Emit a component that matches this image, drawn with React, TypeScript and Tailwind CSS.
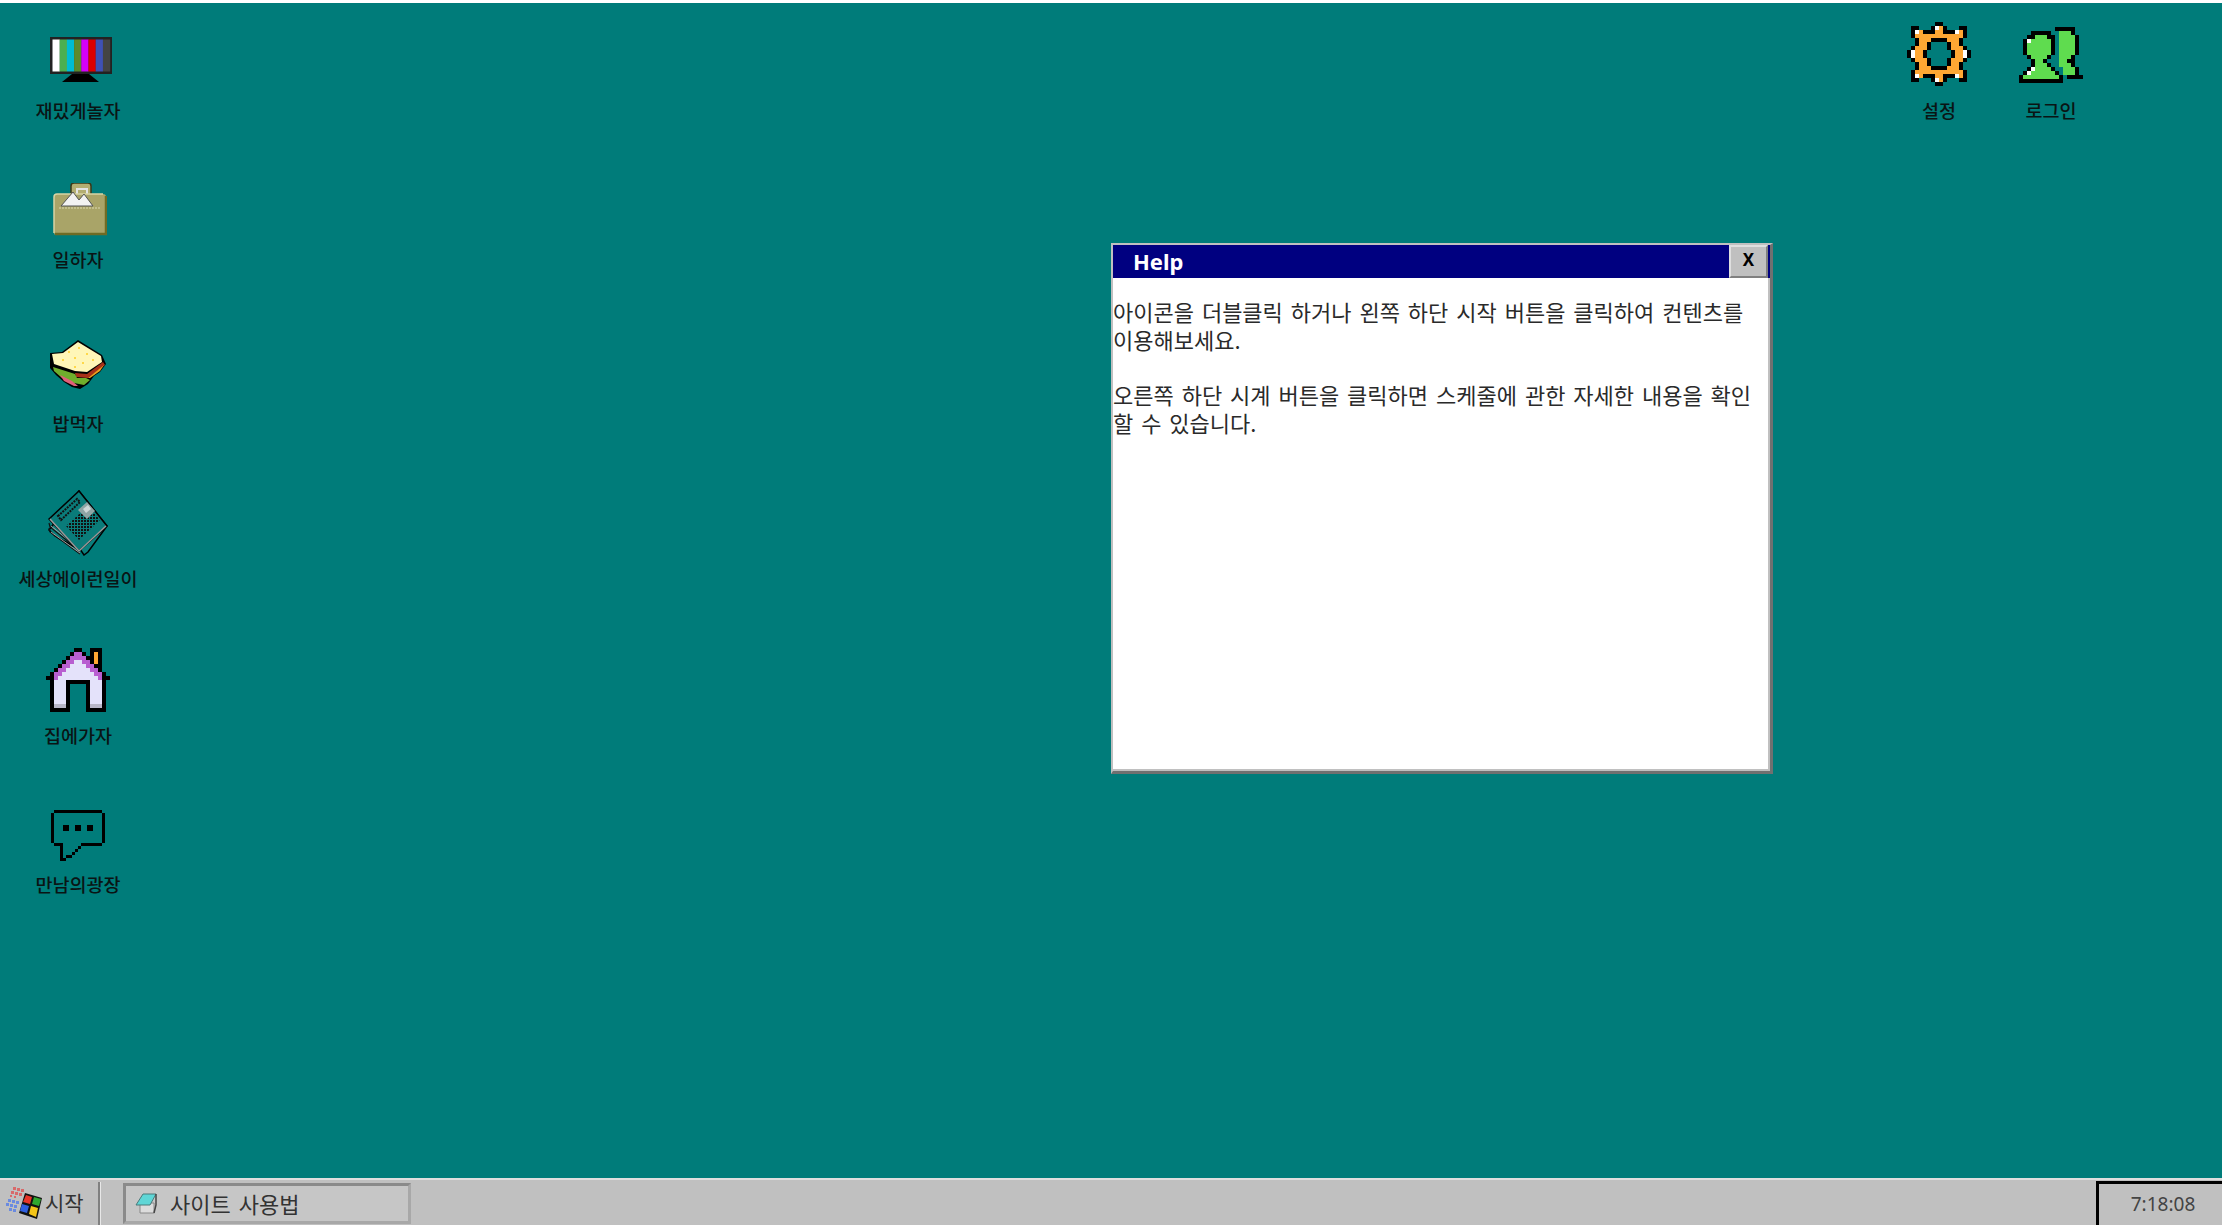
const KO = "font-['Noto_Sans_CJK_KR','Noto_Sans',sans-serif]"

const palette: Record<string, string> = {
  k: '#000000',
  p: '#b85fd0',
  l: '#e4e2fa',
  o: '#ffa733',
  w: '#ffffff',
  g: '#5fdc4f',
  d: '#b9b7c8',
}

function Pixels({ rows, size = 4 }: { rows: string[]; size?: number }) {
  const w = Math.max(...rows.map((r) => r.length))
  return (
    <svg width={w * size} height={rows.length * size} viewBox={`0 0 ${w} ${rows.length}`} shapeRendering="crispEdges">
      {rows.map((row, y) =>
        row.split('').map((c, x) => (palette[c] ? <rect key={`${x}-${y}`} x={x} y={y} width={1} height={1} fill={palette[c]} /> : null)),
      )}
    </svg>
  )
}

const house = [
  '.......kk..kkk..',
  '......kppk.kok..',
  '.....kppppkkok..',
  '....kppllppkok..',
  '...kppllllppkk..',
  '..kppllllllppk..',
  '.kppllllllllppk.',
  'kkpllllllllllpkk',
  '.klllkkkkkklllk.',
  '.klllk....klllk.',
  '.klllk....klllk.',
  '.klllk....klllk.',
  '.klllk....klllk.',
  '.klllk....klllk.',
  '.kdddk....kdddk.',
  '.kkkkk....kkkkk.',
]

const gear = [
  '.......kk.......',
  '.kk...kwok...kk.',
  '.kwokkkookkkwok.',
  '.kooooooooooook.',
  '..koookkkkoook..',
  '..kook....kook..',
  '.koook....koook.',
  'kwook......koowk',
  'kwook......koowk',
  '.koook....koook.',
  '..kook....kook..',
  '..koookkkkoook..',
  '.kooooooooooook.',
  '.kwokkkookkkwok.',
  '.kk...kwok...kk.',
  '.......kk.......',
]

const users = [
  '.........kkkkk..',
  '...kkkkk..gggk..',
  '..kkgggkk.ggggk.',
  '.kwgggggk.ggggk.',
  '.kggggggk.ggggk.',
  '.kggggggk.ggggk.',
  '.kggggggk.ggggk.',
  '..kggggk..gggk..',
  '...kggk...ggkk..',
  '...kgggk..gggk..',
  '..kwggggk..gggk.',
  '.kwggggggk.gggk.',
  'kgggggggggk.kkkk',
  'kkkkkkkkkkk.....',
]

const chat = [
  '.kkkkkkkkkkkkkkkk.',
  'k................k',
  'k................k',
  'k................k',
  'k................k',
  'k...kk..kk..kk...k',
  'k...kk..kk..kk...k',
  'k................k',
  'k................k',
  'k................k',
  'k................k',
  '.kkk......kkkkkkk.',
  '...k.....k........',
  '...k....k.........',
  '...k...k..........',
  '...k.kk...........',
  '...kk.............',
]

function Tv() {
  const bars = ['#ffffff', '#4caf50', '#00bcd4', '#5d8a2e', '#d500f9', '#dd0000', '#3f51b5', '#444444']
  return (
    <svg width={62} height={46} viewBox="0 0 62 46" className="ml-[5px]">
      <rect x={0} y={0} width={62} height={37} fill="#222222" />
      {bars.map((c, i) => (
        <rect key={c} x={2.5 + i * 7.2} y={2.5} width={7.3} height={32} fill={c} />
      ))}
      <path d="M12 45 L22 37 H39 L49 45Z" fill="#000" />
    </svg>
  )
}

function Briefcase() {
  return (
    <svg width={54} height={54} viewBox="0 0 54 54" className="ml-[3px]">
      <path d="M18 12V3q0-3 3-3h14q3 0 3 3v9" fill="#b4ae72" stroke="#3a3818" strokeWidth={1.5} />
      <path d="M24 14V6h10v8" fill="none" stroke="#e4e4e4" strokeWidth={2} />
      <path d="M1 14q0-3 3-3h46q3 0 3 3v36q0 2-2 2H3q-2 0-2-2Z" fill="#a9a468" />
      <path d="M1 50V14q0-3 3-3h46" fill="none" stroke="#d8d4a4" strokeWidth={1.5} />
      <path d="M53 13v38H2" fill="none" stroke="#6f6b24" strokeWidth={2.5} />
      <path d="M6 25h42" stroke="#dcd9b0" strokeWidth={1} strokeDasharray="2 1" />
      <path d="M8 23L20 9l6 8 5-6 9 12Z" fill="#f2f2f2" stroke="#555" strokeWidth={1} />
    </svg>
  )
}

function Sandwich() {
  return (
    <svg width={58} height={50} viewBox="0 0 58 50" className="ml-[1px]">
      <path d="M0 13L12 12 28 0 52 15 56 24 50 32 44 36 38 44 30 49 22 47 14 42 6 35 0 28Z" fill="#000" />
      <path d="M25 33L37 34 53 22 55 25 38 38 26 37Z" fill="#a83018" />
      <path d="M3 27L25 34 27 38 36 38 40 40 34 45 24 43 12 38 4 31Z" fill="#6fae2c" />
      <path d="M38 38L54 25 50 31 40 38Z" fill="#f0a020" />
      <path d="M10 35L22 41 28 46 24 46 14 41Z" fill="#e0607a" />
      <path d="M2 14L13 13 28 2 51 16 52 22 37 32 25 31 4 24Z" fill="#fff6b8" />
      <g fill="#ffd84a">
        <rect x={18} y={11} width={2} height={2} />
        <rect x={28} y={7} width={2} height={2} />
        <rect x={36} y={13} width={2} height={2} />
        <rect x={24} y={17} width={2} height={2} />
        <rect x={12} y={19} width={2} height={2} />
        <rect x={32} y={22} width={2} height={2} />
        <rect x={42} y={19} width={2} height={2} />
        <rect x={24} y={26} width={2} height={2} />
      </g>
    </svg>
  )
}

function Newspaper() {
  return (
    <svg width={60} height={66} viewBox="0 0 60 66">
      <defs>
        <pattern id="dots" width={3} height={3} patternUnits="userSpaceOnUse">
          <rect width={2} height={2} fill="#111" />
        </pattern>
      </defs>
      <path d="M1 40l6 6 5 3 6 3 7 4 7 3 4 6 4-3L59 36 31 1Z" fill="#0b7f7d" stroke="#000" strokeWidth={1.5} />
      <path d="M1 33l1 4 30 24M1 38l1 4 30 22" fill="none" stroke="#111" strokeWidth={1.2} />
      <path d="M3 36l29 23M3 42l29 21" stroke="#a0a0a0" strokeWidth={1} />
      <path d="M1 29L31 1l28 35-28 25Z" fill="#0a7c7a" stroke="#000" strokeWidth={1.5} />
      <path d="M2 29l29 32 27-25" fill="none" stroke="#9a9a9a" strokeWidth={1.5} />
      <path d="M10 26L29 9l3 3-19 18Z" fill="none" stroke="#111" strokeWidth={2} strokeDasharray="2 1" />
      <path d="M18 36l22-20 12 14-21 20Z" fill="url(#dots)" />
      <path d="M30 20l9-8 8 9-8 8Z" fill="#8fa5a5" />
      <path d="M35 19l5-4 3 4-5 4Z" fill="#cfd8d8" />
    </svg>
  )
}

function WinLogo() {
  return (
    <svg width={38} height={33} viewBox="0 0 38 33">
      <g fill="#d86a6a">
        <rect x={8} y={1} width={3} height={3} />
        <rect x={12} y={2} width={3} height={3} />
        <rect x={16} y={3} width={3} height={3} />
        <rect x={6} y={5} width={3} height={3} />
        <rect x={10} y={6} width={3} height={3} />
        <rect x={14} y={7} width={3} height={3} />
        <rect x={5} y={9} width={2} height={2} />
        <rect x={9} y={10} width={2} height={2} />
      </g>
      <g fill="#6a8ae0">
        <rect x={3} y={13} width={3} height={3} />
        <rect x={7} y={14} width={3} height={3} />
        <rect x={11} y={15} width={3} height={3} />
        <rect x={1} y={17} width={3} height={3} />
        <rect x={5} y={18} width={3} height={3} />
        <rect x={9} y={19} width={3} height={3} />
        <rect x={4} y={22} width={3} height={3} />
        <rect x={8} y={23} width={3} height={3} />
      </g>
      <path d="M20 7L37 12 32 33 14 27Z" fill="#111" />
      <path d="M21 9L27 11 25 18 18 16Z" fill="#e8362a" />
      <path d="M29 11L36 13 34 20 27 18Z" fill="#2fa82f" />
      <path d="M17 18L24 20 22 27 15 25Z" fill="#2f5fe0" />
      <path d="M26 20L33 22 31 31 24 28Z" fill="#f4c518" />
    </svg>
  )
}

function BookIcon() {
  return (
    <svg width={22} height={21} viewBox="0 0 22 21">
      <path d="M5 10h14v10H5Z" fill="#dcdcdc" stroke="#888" strokeWidth={1} />
      <path d="M8 1h13l-6 11H1Z" fill="#5fd6d6" stroke="#4a7a7a" strokeWidth={1} />
      <path d="M21 1v11l-2 8" fill="none" stroke="#444" strokeWidth={1.5} />
    </svg>
  )
}

function DeskIcon({ label, gap, className, children }: { label: string; gap: string; className?: string; children: React.ReactNode }) {
  return (
    <div className={`flex w-[110px] flex-col items-center ${gap} ${className ?? ''}`}>
      {children}
      <span className="h-6 text-[18.5px] leading-6 font-medium whitespace-nowrap text-[#0a1414]">{label}</span>
    </div>
  )
}

export default function App() {
  return (
    <div className={`flex h-screen flex-col overflow-hidden bg-white ${KO}`}>
      <main className="relative mt-[3px] flex flex-1 justify-between bg-[#007c7a]">
        <div className="flex w-[156px] flex-col items-center pt-[34px]">
          <DeskIcon label="재밌게놀자" gap="gap-[15px]"><Tv /></DeskIcon>
          <DeskIcon label="일하자" gap="gap-[10px]" className="mt-[61px]"><Briefcase /></DeskIcon>
          <DeskIcon label="밥먹자" gap="gap-[21px]" className="mt-[69px]"><Sandwich /></DeskIcon>
          <DeskIcon label="세상에이런일이" gap="gap-[10px]" className="mt-[55px]"><Newspaper /></DeskIcon>
          <DeskIcon label="집에가자" gap="gap-[11px]" className="mt-[58px]"><Pixels rows={house} /></DeskIcon>
          <DeskIcon label="만남의광장" gap="gap-[11px]" className="mt-[63px]"><Pixels rows={chat} size={3} /></DeskIcon>
        </div>

        <div className="flex items-start gap-[2px] pt-[19px] pr-[116px]">
          <DeskIcon label="설정" gap="gap-[12px]"><Pixels rows={gear} /></DeskIcon>
          <DeskIcon label="로그인" gap="gap-[12px]">
            <div className="flex h-[64px] items-start pt-[5px]">
              <Pixels rows={users} />
            </div>
          </DeskIcon>
        </div>

        <section className="absolute top-[240px] left-[1111px] flex h-[531px] w-[662px] flex-col border-2 border-r-[3px] border-b-[3px] border-[#c0c0c0] border-r-[#707070] border-b-[#707070] bg-white shadow-[inset_-2px_-2px_0_#c0c0c0]">
          <header className="flex h-[33px] items-center justify-between bg-[#000080] pl-[20px]">
            <span className="font-['Noto_Sans',sans-serif] text-[22px] font-bold text-white">Help</span>
            <button className="mr-[2px] flex h-[33px] w-[39px] items-center justify-center border-2 border-[#dfdfdf] border-r-[#808080] border-b-[#808080] bg-[#c0c0c0] pb-[3px] font-['Noto_Sans',sans-serif] text-[17px] font-bold text-black">
              X
            </button>
          </header>
          <div className="pt-[20px] pr-2 text-[22px] leading-[27.7px] [word-spacing:3px] text-[#2a2a2a]">
            <p>아이콘을 더블클릭 하거나 왼쪽 하단 시작 버튼을 클릭하여 컨텐츠를 이용해보세요.</p>
            <br />
            <p>오른쪽 하단 시계 버튼을 클릭하면 스케줄에 관한 자세한 내용을 확인할 수 있습니다.</p>
          </div>
        </section>
      </main>

      <footer className="mb-[2px] flex h-[47px] items-stretch border-t-2 border-[#dfdfdf] bg-[#c0c0c0]">
        <button className="flex w-[98px] items-center gap-[2px] pl-[5px] text-[21px] text-[#333]">
          <WinLogo />
          시작
        </button>
        <div className="mt-[2px] w-[3px] border-l-2 border-[#808080] border-r border-r-[#e8e8e8]" />
        <div className="mt-[3px] mb-[1px] ml-[22px] flex w-[288px] items-center gap-[13px] border-[3px] border-[#8a8a8a] border-r-[#a8a8a8] border-b-[#a8a8a8] bg-[#c6c6c6] pl-[9px] text-[22px] [word-spacing:3px] text-[#333]">
          <BookIcon />
          사이트 사용법
        </div>
        <div className="mt-[1px] ml-auto flex w-[126px] items-center justify-center border-t-[3px] border-l-[3px] border-black pl-[5px] font-['Noto_Sans',sans-serif] text-[19px] text-[#444]">
          7:18:08
        </div>
      </footer>
    </div>
  )
}
